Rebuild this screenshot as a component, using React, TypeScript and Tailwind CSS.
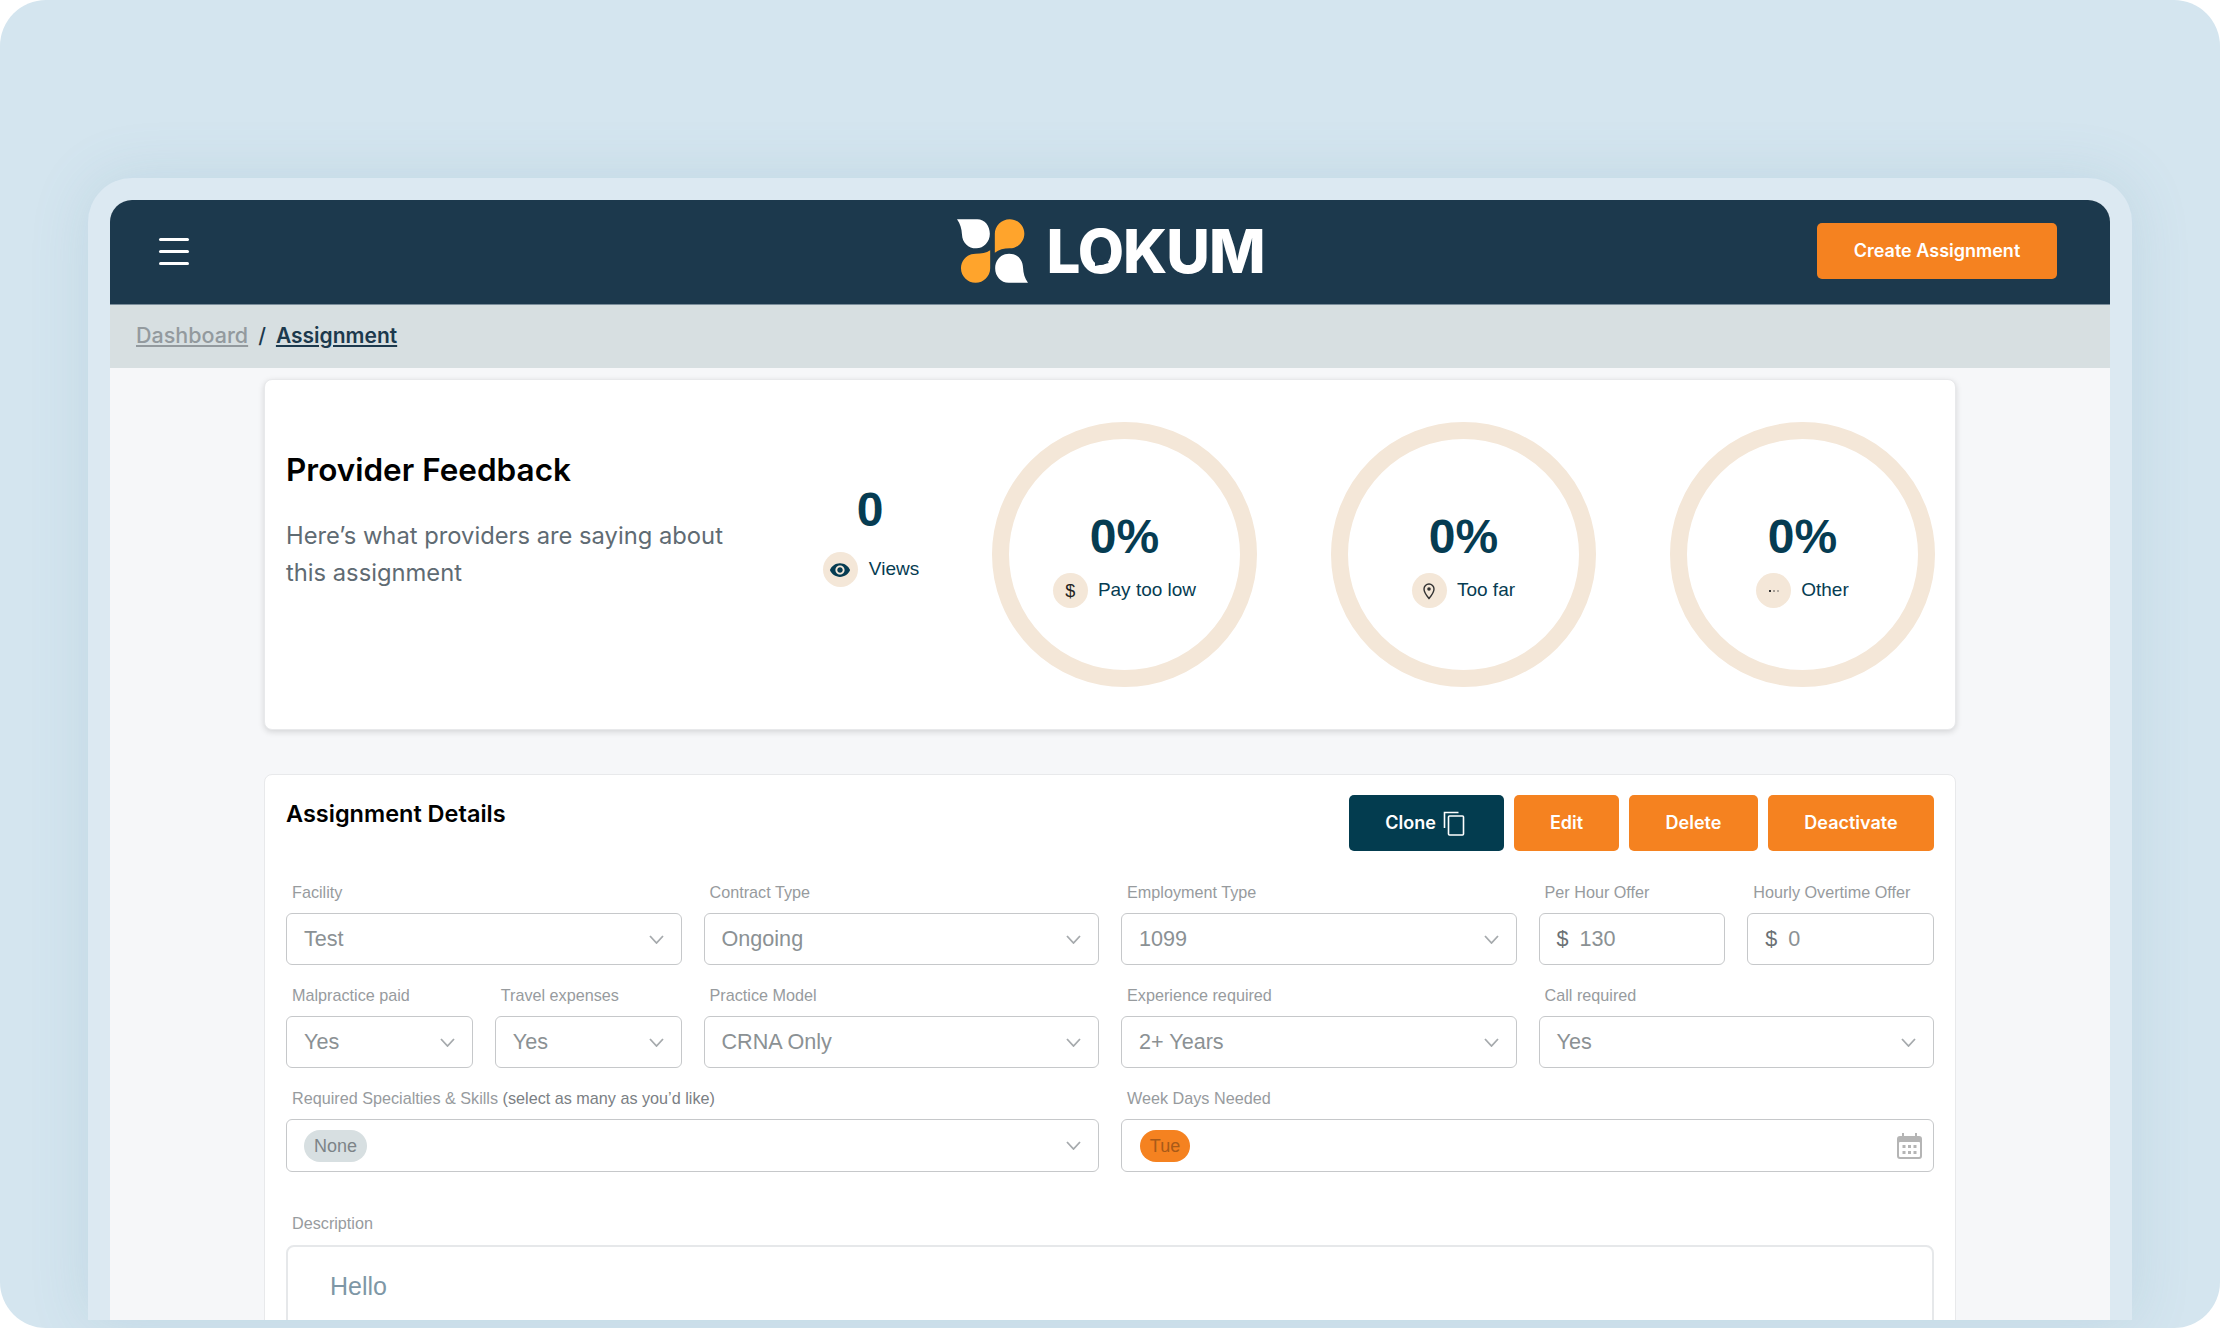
import { ReactNode } from 'react';

const sans = "font-['Liberation_Sans',Arial,sans-serif]";
const inter = "font-['Inter',sans-serif]";

function Chevron() {
  return (
    <svg width="15" height="9" viewBox="0 0 15 9" fill="none" className="shrink-0">
      <path d="M1 1l6.5 7L14 1" stroke="#a6aaad" strokeWidth="1.8" />
    </svg>
  );
}

function Field({ label, span, children }: { label: ReactNode; span: string; children: ReactNode }) {
  return (
    <div className={span}>
      <div className="h-5 mb-[10px] pl-[6px] text-[16.2px] leading-[18px] text-[#979b9e]">{label}</div>
      {children}
    </div>
  );
}

function Select({ value, span, label }: { value: string; span: string; label: string }) {
  return (
    <Field label={label} span={span}>
      <div className="h-[52px] pl-[17px] pr-[17px] flex items-center justify-between border-[1.5px] border-[#c6c8ca] rounded-md bg-white">
        <span className="text-[21.6px] text-[#8b9194]">{value}</span>
        <Chevron />
      </div>
    </Field>
  );
}

function MoneyInput({ value, label }: { value: string; label: string }) {
  return (
    <Field label={label} span="col-span-1">
      <div className="h-[52px] px-[17px] flex items-center gap-[11px] border-[1.5px] border-[#c6c8ca] rounded-md bg-white text-[21.6px]">
        <span className="text-[#6b7175]">$</span>
        <span className="text-[#8b9194]">{value}</span>
      </div>
    </Field>
  );
}

function IconDot({ children }: { children: ReactNode }) {
  return (
    <span className="w-[35px] h-[35px] rounded-full bg-[#f4e7d8] flex items-center justify-center shrink-0">
      {children}
    </span>
  );
}

function Ring({ label, icon }: { label: string; icon: ReactNode }) {
  return (
    <div className="w-[265px] h-[265px] rounded-full border-[17px] border-[#f4e7d8] flex flex-col items-center pt-[74px] shrink-0">
      <div className="text-[48px] leading-[48px] font-bold text-[#063c52]">0%</div>
      <div className="mt-3 flex items-center gap-[10px]">
        <IconDot>{icon}</IconDot>
        <span className="text-[19px] text-[#063c52]">{label}</span>
      </div>
    </div>
  );
}

function Logo() {
  return (
    <div className="flex items-center gap-[18px] justify-self-center translate-x-[3px]">
      <svg width="71" height="64" viewBox="174 84 214 192">
        <path fill="#fff" d="M174 84L235 84C258 84 273 104 273 128C273 152 255 172 232 172C208 172 190 155 189 130C188 112 184 98 174 84Z" />
        <path fill="#ffa42c" d="M288 185L288 128C288 104 308 84 333 84C357 84 377 104 377 128C377 152 357 172 333 172C315 172 300 176 288 185Z" />
        <path fill="#ffa42c" d="M274 178L274 232C274 256 254 276 230 276C206 276 186 256 186 232C186 208 206 188 230 188C248 188 262 186 274 178Z" />
        <path fill="#fff" d="M388 276L330 276C306 276 289 256 289 232C289 208 307 188 331 188C355 188 372 205 373 230C374 248 378 262 388 276Z" />
      </svg>
      <span className={`${inter} relative text-[60px] leading-none font-extrabold text-white tracking-[-1px]`}>
        LOKUM
        <svg width="18" height="18" viewBox="0 0 18 18" className="absolute left-[47px] top-[28px]">
          <path d="M2 1L2 17L16 14Z" fill="#1c394d" />
        </svg>
      </span>
    </div>
  );
}

export default function App() {
  return (
    <div className={`${sans} w-[2220px] h-[1328px] bg-white overflow-hidden`}>
      <div className="h-full bg-[#d4e5ef] rounded-[46px] overflow-hidden pt-[178px] px-[88px]">
        <div className="h-[1142px] bg-[#dce9f2] rounded-t-[44px] pt-[22px] px-[22px] shadow-[0_0_60px_rgba(90,140,170,0.16)]">
          <div className="h-full rounded-t-[22px] overflow-hidden bg-[#f6f7f9]">
            <header className="h-[105px] bg-[#1c394d] border-b border-[#7b8e9b] grid grid-cols-3 items-center pl-[49px] pr-[53px] pb-[2px]">
              <div className="w-[30px] flex flex-col gap-[9px]">
                <span className="h-[3px] bg-white rounded-full" />
                <span className="h-[3px] bg-white rounded-full" />
                <span className="h-[3px] bg-white rounded-full" />
              </div>
              <Logo />
              <button className={`${inter} justify-self-end w-[240px] h-[56px] rounded-[5px] bg-[#f58220] text-lg font-semibold text-white`}>
                Create Assignment
              </button>
            </header>

            <nav className={`${inter} h-[63px] bg-[#d7dfe1] pl-[26px] pb-[2px] flex items-center gap-[10px] font-medium`}>
              <a className="underline text-[21.5px] text-[#939a9e]">Dashboard</a>
              <span className="text-[21px] text-[#1c394d]">/</span>
              <a className="underline text-[21px] text-[#1c394d] font-semibold">Assignment</a>
            </nav>

            <main className="px-[154px] pt-[11px]">
              <section className="h-[351px] bg-white rounded-lg border border-[#e8e9eb] shadow-[0_2px_6px_rgba(0,0,0,0.14)] flex pl-[21px] pt-[42px]">
                <div className="w-[514px] shrink-0 pt-[28px]">
                  <h1 className={`${inter} text-[31.5px] leading-10 font-semibold text-black`}>Provider Feedback</h1>
                  <p className={`${inter} mt-[27px] w-[470px] text-[23.75px] leading-[37px] text-[#5f6b73]`}>
                    Here’s what providers are saying about this assignment
                  </p>
                </div>
                <div className="w-[140px] shrink-0 flex flex-col items-center pt-[64px]">
                  <div className="text-[48px] leading-[48px] font-bold text-[#063c52]">0</div>
                  <div className="mt-[18px] flex items-center gap-[11px] translate-x-[1px]">
                    <IconDot>
                      <svg width="22" height="22" viewBox="0 0 24 24" fill="#063c52">
                        <path d="M12 4.5C7 4.5 2.73 7.61 1 12c1.73 4.39 6 7.5 11 7.5s9.27-3.11 11-7.5c-1.73-4.39-6-7.5-11-7.5zM12 17c-2.76 0-5-2.24-5-5s2.24-5 5-5 5 2.24 5 5-2.24 5-5 5zm0-8c-1.66 0-3 1.34-3 3s1.34 3 3 3 3-1.34 3-3-1.34-3-3-3z" />
                      </svg>
                    </IconDot>
                    <span className="text-[19px] text-[#063c52]">Views</span>
                  </div>
                </div>
                <div className="ml-[52px] flex gap-[74px]">
                  <Ring
                    label="Pay too low"
                    icon={<span className="text-lg leading-none text-[#222]">$</span>}
                  />
                  <Ring
                    label="Too far"
                    icon={
                      <svg width="16" height="18" viewBox="0 0 16 18" fill="none">
                        <path d="M8 16.5C5.5 13.5 3 10.6 3 7a5 5 0 0 1 10 0c0 3.6-2.5 6.5-5 9.5z" stroke="#333" strokeWidth="1.4" />
                        <circle cx="8" cy="7" r="1.8" fill="#333" />
                      </svg>
                    }
                  />
                  <Ring
                    label="Other"
                    icon={
                      <svg width="12" height="4" viewBox="0 0 12 4">
                        <rect x="1" y="1" width="2" height="2" fill="#333" />
                        <rect x="5" y="1" width="2" height="2" fill="#a49c93" />
                        <rect x="9" y="1" width="2" height="2" fill="#b5ada3" />
                      </svg>
                    }
                  />
                </div>
              </section>

              <section className="mt-[44px] h-[560px] bg-white rounded-lg border border-[#e8e9eb] px-[21px] pt-[20px]">
                <div className="flex justify-between">
                  <h2 className={`${inter} text-[23.5px] leading-[38px] font-semibold text-black`}>Assignment Details</h2>
                  <div className={`${inter} flex gap-[10px] text-lg font-semibold text-white`}>
                    <button className="w-[155px] h-[56px] rounded-[5px] bg-[#033c4f] flex items-center justify-center gap-[7px] pr-[3px]">
                      Clone
                      <svg width="22" height="25" viewBox="0 0 22 25" fill="none" stroke="#fff" strokeWidth="1.6">
                        <path d="M1.5 17V1.5h14" />
                        <rect x="5.5" y="5" width="15" height="19" rx="1" />
                      </svg>
                    </button>
                    <button className="w-[105px] h-[56px] rounded-[5px] bg-[#f58220]">Edit</button>
                    <button className="w-[129px] h-[56px] rounded-[5px] bg-[#f58220]">Delete</button>
                    <button className="w-[166px] h-[56px] rounded-[5px] bg-[#f58220]">Deactivate</button>
                  </div>
                </div>

                <div className="mt-[32px] grid grid-cols-8 gap-x-[22px] gap-y-[21px]">
                  <Select span="col-span-2" label="Facility" value="Test" />
                  <Select span="col-span-2" label="Contract Type" value="Ongoing" />
                  <Select span="col-span-2" label="Employment Type" value="1099" />
                  <MoneyInput label="Per Hour Offer" value="130" />
                  <MoneyInput label="Hourly Overtime Offer" value="0" />

                  <Select span="col-span-1" label="Malpractice paid" value="Yes" />
                  <Select span="col-span-1" label="Travel expenses" value="Yes" />
                  <Select span="col-span-2" label="Practice Model" value="CRNA Only" />
                  <Select span="col-span-2" label="Experience required" value="2+ Years" />
                  <Select span="col-span-2" label="Call required" value="Yes" />

                  <Field
                    span="col-span-4"
                    label={
                      <>
                        Required Specialties &amp; Skills <span className="text-[#7b8084]">(select as many as you’d like)</span>
                      </>
                    }
                  >
                    <div className="h-[53px] pl-[17px] pr-[17px] flex items-center justify-between border-[1.5px] border-[#c6c8ca] rounded-md">
                      <span className="h-8 w-[63px] rounded-full bg-[#d7dfe1] flex items-center justify-center text-lg text-[#7d8488]">None</span>
                      <Chevron />
                    </div>
                  </Field>
                  <Field span="col-span-4" label="Week Days Needed">
                    <div className="h-[53px] pl-[18px] pr-[11px] flex items-center justify-between border-[1.5px] border-[#c6c8ca] rounded-md">
                      <span className="h-8 w-[50px] rounded-full bg-[#f58220] flex items-center justify-center text-lg text-[#a85a18]">Tue</span>
                      <svg width="25" height="26" viewBox="0 0 25 26">
                        <path fill="#b5b5b5" d="M5 0h2v3h11V0h2v3h2a3 3 0 0 1 3 3v17a3 3 0 0 1-3 3H3a3 3 0 0 1-3-3V6a3 3 0 0 1 3-3h2z" />
                        <rect x="2" y="9" width="21" height="15" rx="1" fill="#fff" />
                        <g fill="#b5b5b5">
                          <rect x="5.5" y="12" width="3" height="3" />
                          <rect x="11" y="12" width="3" height="3" />
                          <rect x="16.5" y="12" width="3" height="3" />
                          <rect x="5.5" y="18" width="3" height="3" />
                          <rect x="11" y="18" width="3" height="3" />
                          <rect x="16.5" y="18" width="3" height="3" />
                        </g>
                      </svg>
                    </div>
                  </Field>
                </div>

                <div className="mt-[42px]">
                  <div className="h-5 mb-[11px] pl-[6px] text-[16.2px] leading-[18px] text-[#979b9e]">Description</div>
                  <div className="h-[200px] border-2 border-[#e6e8ea] rounded-lg pl-[42px] pt-[24px] text-[25px] leading-[30px] text-[#7e97a6]">
                    Hello
                  </div>
                </div>
              </section>
            </main>
          </div>
        </div>
      </div>
    </div>
  );
}
